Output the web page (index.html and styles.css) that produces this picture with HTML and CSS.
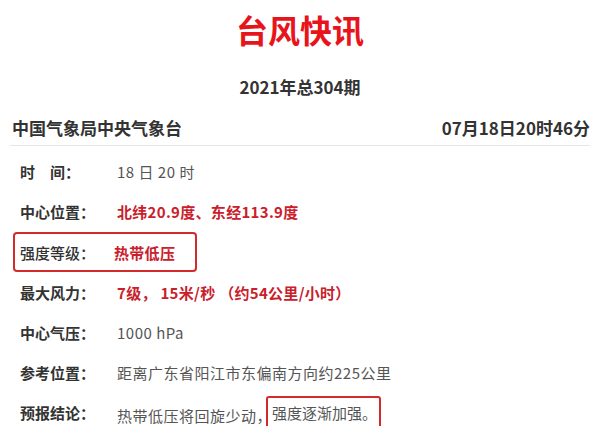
FILE: index.html
```html
<!DOCTYPE html>
<html lang="zh-CN">
<head>
<meta charset="UTF-8">
<meta name="viewport" content="width=device-width, initial-scale=1.0">
<title>台风快讯</title>
<link rel="stylesheet" href="styles.css">
</head>
<body>
  <div class="container">
    <h1 class="title">台风快讯</h1>
    <div class="issue">2021年总304期</div>
    <div class="header">
      <span class="source">中国气象局中央气象台</span>
      <span class="stamp">07月18日20时46分</span>
    </div>
    <div class="rows">
      <div class="row">
        <span class="label">时&emsp;间：</span>
        <span class="value">18 日 20 时</span>
      </div>
      <div class="row">
        <span class="label">中心位置：</span>
        <span class="value red">北纬20.9度、东经113.9度</span>
      </div>
      <div class="row boxed">
        <span class="label">强度等级：</span>
        <span class="value red">热带低压</span>
      </div>
      <div class="row">
        <span class="label">最大风力：</span>
        <span class="value red">7级，&nbsp;15米/秒 （约54公里/小时）</span>
      </div>
      <div class="row">
        <span class="label">中心气压：</span>
        <span class="value">1000 hPa</span>
      </div>
      <div class="row">
        <span class="label">参考位置：</span>
        <span class="value">距离广东省阳江市东偏南方向约225公里</span>
      </div>
      <div class="row">
        <span class="label">预报结论：</span>
        <span class="value">热带低压将回旋少动，<span class="mark">强度逐渐加强。</span></span>
      </div>
    </div>
  </div>
</body>
</html>
```

FILE: styles.css
```css
body {
  margin: 0;
  padding: 0;
  background: #fff;
  font-family: "Noto Sans CJK SC", "Noto Sans", sans-serif;
  color: #333;
}

.container {
  width: 600px;
  padding: 0 10px;
  box-sizing: border-box;
}

.title {
  margin: 0;
  padding-top: 6px;
  height: 46px;
  line-height: 46px;
  text-align: center;
  font-size: 32px;
  font-weight: 700;
  color: #e8141b;
}

.issue {
  margin-top: 23px;
  height: 24px;
  line-height: 24px;
  text-align: center;
  font-size: 17px;
  font-weight: 700;
  color: #333;
}

.header {
  display: flex;
  justify-content: space-between;
  align-items: center;
  margin-top: 18px;
  padding: 0 0 6px 2px;
  height: 22px;
  line-height: 22px;
  font-size: 17px;
  border-bottom: 1px solid #e6e6e6;
}

.source {
  font-weight: 600;
}

.stamp {
  font-weight: 700;
}

.rows {
  padding-top: 5px;
}

.row {
  display: flex;
  align-items: center;
  height: 40px;
  font-size: 15px;
}

.label {
  width: 97px;
  padding-left: 10px;
  font-weight: 600;
  color: #333;
}

.value {
  color: #555;
  letter-spacing: 0.5px;
}

.value.red {
  color: #c9202b;
  font-weight: 700;
  letter-spacing: 0.3px;
}

.boxed {
  width: 180px;
  margin-left: 3px;
  margin-top: 1px;
  height: 36px;
  border: 2px solid #d42a2c;
  border-radius: 4px;
}

.boxed .label {
  width: 94px;
  padding-left: 5px;
  font-weight: 500;
}

.mark {
  display: inline-block;
  margin-left: -6px;
  padding: 4px 2px 4px 4px;
  border: 2px solid #d42a2c;
  border-radius: 3px;
  letter-spacing: 0;
  vertical-align: 3px;
}
```
